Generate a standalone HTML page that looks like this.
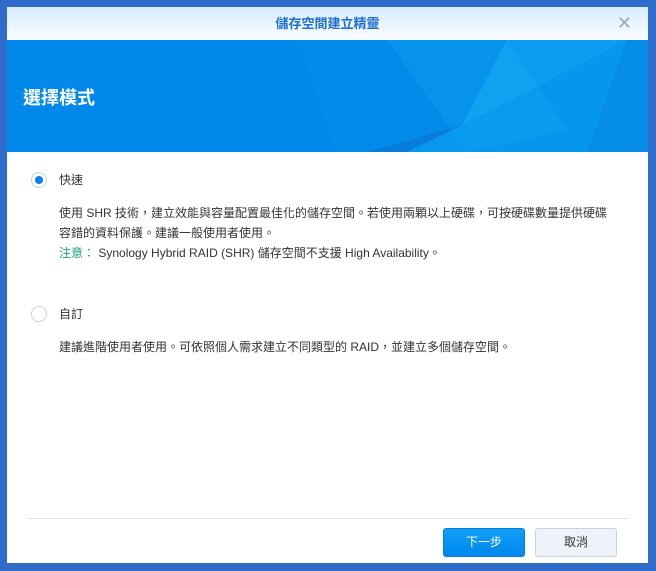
<!DOCTYPE html>
<html><head><meta charset="utf-8"><style>
body{margin:0;width:656px;height:571px;background:#2f6ccc;overflow:hidden;font-family:"Liberation Sans","Noto Sans CJK TC",sans-serif;position:relative}
.dlg{position:absolute;left:7px;top:7px;width:641px;height:556px;background:#fff;overflow:hidden}
.tb{position:absolute;left:0;top:0;width:641px;height:33px;background:linear-gradient(#d6ebfb,#fbfdff);text-align:center;line-height:33px;font-size:13px;color:#1e6fd0;font-weight:bold}
.x{position:absolute;right:16px;top:0;color:#a0a8b0;font-size:18px;font-weight:normal}
.ban{position:absolute;left:0;top:33px;width:641px;height:112px;background:#0089ea;overflow:hidden}
.ban h1{position:absolute;left:16px;top:44px;margin:0;font-size:18px;color:#fff}
.r{position:absolute;width:14px;height:14px;border:1px solid #c8d2dc;border-radius:50%;background:#fff}
.r.on{border-color:#b9d4ee}
.r.on:after{content:"";position:absolute;left:3px;top:3px;width:8px;height:8px;border-radius:50%;background:#0a7ff0}
.t{position:absolute;font-size:12px;color:#333;line-height:20px}
.btn{position:absolute;top:521px;width:80px;height:27px;border-radius:3px;font-size:12px;text-align:center;line-height:27px}
</style></head><body>
<div class="dlg">
<div class="tb">儲存空間建立精靈<span class="x">✕</span></div>
<div class="ban">
<svg width="641" height="112" style="position:absolute;left:0;top:0">
<polygon points="290,0 380,0 460,112 330,112" fill="#0990ee" opacity=".35"/>
<polygon points="380,0 500,0 560,90 460,112" fill="#14a4f2" opacity=".35"/>
<polygon points="500,0 620,0 455,85" fill="#1cb4f6" opacity=".45"/>
<polygon points="455,85 620,0 580,112 400,112" fill="#0ea8f2" opacity=".45"/>
<polygon points="455,85 400,112 360,112" fill="#0a70d0" opacity=".5"/>
<polygon points="620,0 641,0 641,112 580,112" fill="#0a90e6" opacity=".6"/>
</svg>
<h1>選擇模式</h1></div>
<div class="r on" style="left:24px;top:165px"></div>
<div class="t" style="left:52px;top:163px">快速</div>
<div class="t" style="left:52px;top:196px">使用 SHR 技術，建立效能與容量配置最佳化的儲存空間。若使用兩顆以上硬碟，可按硬碟數量提供硬碟<br>容錯的資料保護。建議一般使用者使用。<br><span style="color:#1aa37a">注意：</span> Synology Hybrid RAID (SHR) 儲存空間不支援 High Availability。</div>
<div class="r" style="left:24px;top:299px"></div>
<div class="t" style="left:52px;top:297px">自訂</div>
<div class="t" style="left:52px;top:330px">建議進階使用者使用。可依照個人需求建立不同類型的 RAID，並建立多個儲存空間。</div>
<div style="position:absolute;left:21px;top:511px;width:600px;height:1px;background:#dde2e6"></div>
<div class="btn" style="left:436px;background:linear-gradient(#10a0f8,#0088ec);color:#fff;border:1px solid #0a7fd8">下一步</div>
<div class="btn" style="left:528px;background:#eef3f9;color:#333;border:1px solid #c8d3df">取消</div>
</div>
</body></html>
